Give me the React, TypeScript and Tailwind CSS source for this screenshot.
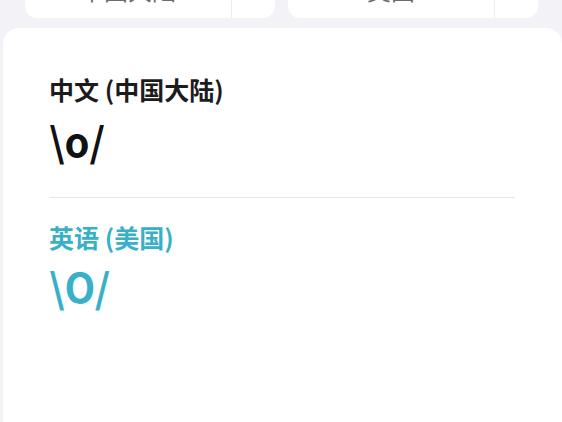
import React from 'react';

const font = { fontFamily: '"Noto Sans CJK SC", "Noto Sans", sans-serif' };

function TopPill({ label }: { label: string }) {
  return (
    <div className="flex h-[48px] w-[250px] overflow-hidden rounded-b-[12px] bg-white">
      <div className="flex flex-1 items-start justify-center pt-[8px] text-[24px] leading-none text-[#6b6b70]">
        {label}
      </div>
      <div className="w-[44px] border-l border-[#ececf0]"></div>
    </div>
  );
}

export default function App() {
  return (
    <div className="flex h-[422px] w-[562px] flex-col overflow-hidden bg-[#f2f2f7]" style={font}>
      <div className="flex h-[18px] items-end gap-[13px] pl-[25px]">
        <TopPill label="中国大陆" />
        <TopPill label="美国" />
      </div>
      <div className="mt-[10px] ml-[3px] flex-1 rounded-t-[16px] bg-white pl-[46px] pr-[47px] pt-[48px]">
        <div className="text-[25px] font-semibold leading-[26px] text-[#1c1c1e]">中文 (中国大陆)</div>
        <div className="mt-[16px] text-[40px] font-bold leading-[44px] text-[#111]">\o/</div>
        <div className="mt-[35px] h-px bg-[#e6e6ea]"></div>
        <div className="mt-[26px] text-[25px] font-semibold leading-[26px] text-[#38b0c8]">英语 (美国)</div>
        <div className="mt-[14px] text-[40px] font-semibold leading-[44px] text-[#38b0c8]">\O/</div>
      </div>
    </div>
  );
}
